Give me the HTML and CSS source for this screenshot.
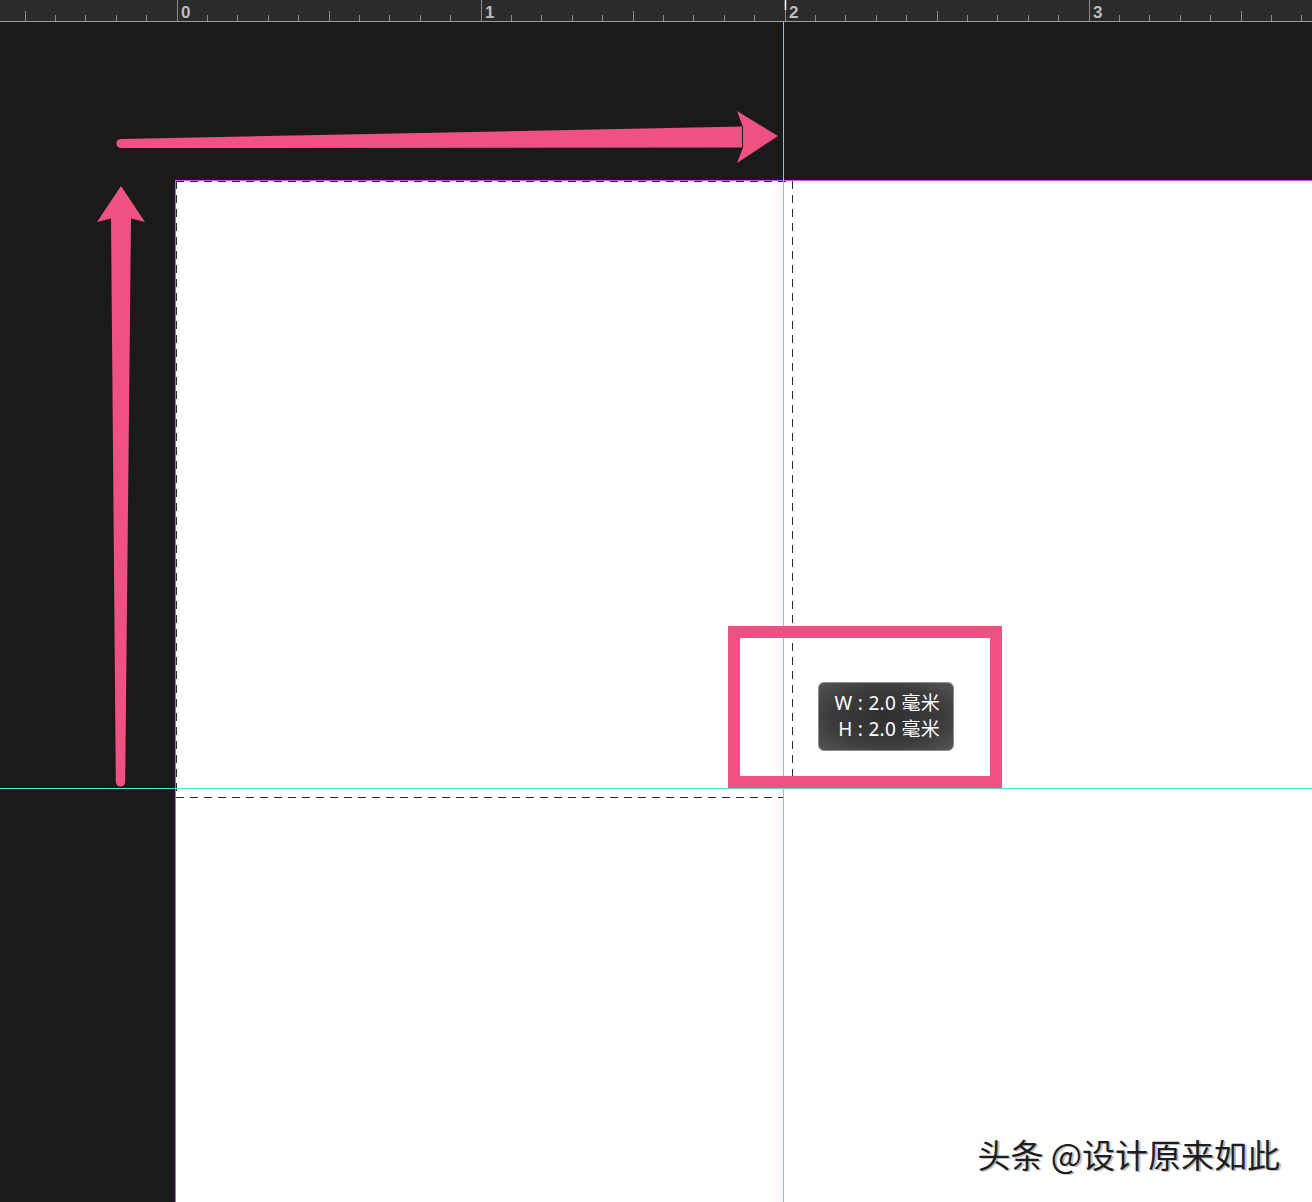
FILE: index.html
```html
<!DOCTYPE html>
<html lang="zh">
<head>
<meta charset="utf-8">
<title>Artboard</title>
<link rel="stylesheet" href="styles.css">
</head>
<body>
<div class="page">
  <header class="ruler">
    <svg class="ruler-svg" width="1312" height="21" viewBox="0 0 1312 21">
      <path class="tick" d="M25.5 11V21M55.5 15V21M85.5 15V21M116.5 15V21M146.5 15V21M207.5 15V21M237.5 15V21M268.5 15V21M298.5 15V21M329.5 11V21M359.5 15V21M389.5 15V21M420.5 15V21M450.5 15V21M511.5 15V21M541.5 15V21M572.5 15V21M602.5 15V21M633.5 11V21M663.5 15V21M693.5 15V21M724.5 15V21M754.5 15V21M815.5 15V21M845.5 15V21M876.5 15V21M906.5 15V21M937.5 11V21M967.5 15V21M997.5 15V21M1028.5 15V21M1058.5 15V21M1119.5 15V21M1149.5 15V21M1180.5 15V21M1210.5 15V21M1241.5 11V21M1271.5 15V21M1301.5 15V21"/>
      <path class="major" d="M177.5 0V21M481.5 0V21M785.5 0V21M1089.5 0V21"/>
      <path class="cursor" d="M785.5 0V10"/>
    </svg>
    <span class="num n0">0</span>
    <span class="num n1">1</span>
    <span class="num n2">2</span>
    <span class="num n3">3</span>
  </header>
  <main class="canvas">
    <section class="artboard"></section>
  </main>

  <svg class="overlay" width="1312" height="1202" viewBox="0 0 1312 1202">
    <g class="selection">
      <path d="M176 181.5H792"/>
      <path d="M176.5 181V797"/>
      <path d="M792.5 181V776"/>
      <path d="M176 797.5H783"/>
    </g>
    <rect class="guide-v" x="783" y="22" width="1" height="1180"/>
    <rect class="guide-h" x="0" y="788" width="1312" height="1"/>
    <g class="arrow">
      <circle cx="121" cy="143.5" r="4.6"/>
      <polygon points="121,139 742,126.5 742,147.5 121,148"/>
      <polygon points="743,127 737,111 778,136 737,163 743,147.5"/>
      <circle cx="120.5" cy="782" r="4.6"/>
      <polygon points="111,218 131,218 125.2,782 115.8,782"/>
      <polygon points="111,218.5 97,222 121,186 145,222 131,218.5"/>
    </g>
  </svg>

  <div class="callout"></div>
  <div class="tooltip">
    <div class="tip-line">W : 2.0 毫米</div>
    <div class="tip-line">H : 2.0 毫米</div>
  </div>
  <div class="watermark">头条 @设计原来如此</div>
</div>
</body>
</html>
```

FILE: styles.css
```css
html, body {
  margin: 0;
  padding: 0;
  background: #1a1a1a;
}

.page {
  position: relative;
  width: 1312px;
  height: 1202px;
  overflow: hidden;
  background: #1a1a1a;
  font-family: "Noto Sans", "Noto Sans CJK SC", sans-serif;
}

.ruler {
  position: relative;
  height: 21px;
  background: #2b2b2b;
  border-bottom: 1px solid #9c9c9c;
}

.ruler-svg {
  display: block;
}

.tick {
  stroke: #8c8c8c;
  stroke-width: 1;
  fill: none;
}

.major {
  stroke: #8a8a8a;
  stroke-width: 1;
  fill: none;
}

.cursor {
  stroke: #ffffff;
  stroke-width: 1.5;
}

.num {
  position: absolute;
  top: 5px;
  font-family: "Liberation Sans", "Noto Sans", sans-serif;
  font-size: 17px;
  font-weight: 700;
  line-height: 15px;
  color: #bdbdbd;
}

.n0 { left: 181px; }
.n1 { left: 485px; }
.n2 { left: 789px; }
.n3 { left: 1093px; }

.canvas {
  display: flex;
  height: 1180px;
  padding: 158px 0 0 175px;
  box-sizing: border-box;
}

.artboard {
  flex: 1;
  background: #ffffff;
  border-left: 1px solid #c35ce0;
  border-top: 1px solid #c35ce0;
}

.overlay {
  position: absolute;
  left: 0;
  top: 0;
  pointer-events: none;
}

.selection path {
  stroke: #2a2a2a;
  stroke-width: 1;
  stroke-dasharray: 8 6;
  fill: none;
}

.guide-v,
.guide-h {
  fill: #4fdde6;
  shape-rendering: crispEdges;
}

.arrow {
  fill: #ef5282;
}

.callout {
  position: absolute;
  left: 728px;
  top: 626px;
  width: 274px;
  height: 162px;
  box-sizing: border-box;
  border: 12px solid #ef5282;
}

.tooltip {
  position: absolute;
  left: 818px;
  top: 682px;
  width: 136px;
  height: 69px;
  box-sizing: border-box;
  padding: 7px 13px 0 0;
  border-radius: 6px;
  border: 1px solid #8e8e8e;
  background: radial-gradient(ellipse at center, #2f2f2f 0%, #3c3c3c 60%, #555555 100%);
  color: #ffffff;
  text-align: right;
}

.tip-line {
  font-family: "Noto Sans", "Noto Sans CJK SC", sans-serif;
  font-size: 19px;
  line-height: 26px;
  letter-spacing: 0.3px;
  white-space: nowrap;
}

.watermark {
  position: absolute;
  right: 32px;
  top: 1131px;
  font-family: "Noto Sans CJK SC", sans-serif;
  font-size: 33px;
  line-height: 46px;
  color: #1e1e1e;
  text-shadow: 2px 1px 0 rgba(0, 0, 0, 0.25);
  white-space: nowrap;
}
```
